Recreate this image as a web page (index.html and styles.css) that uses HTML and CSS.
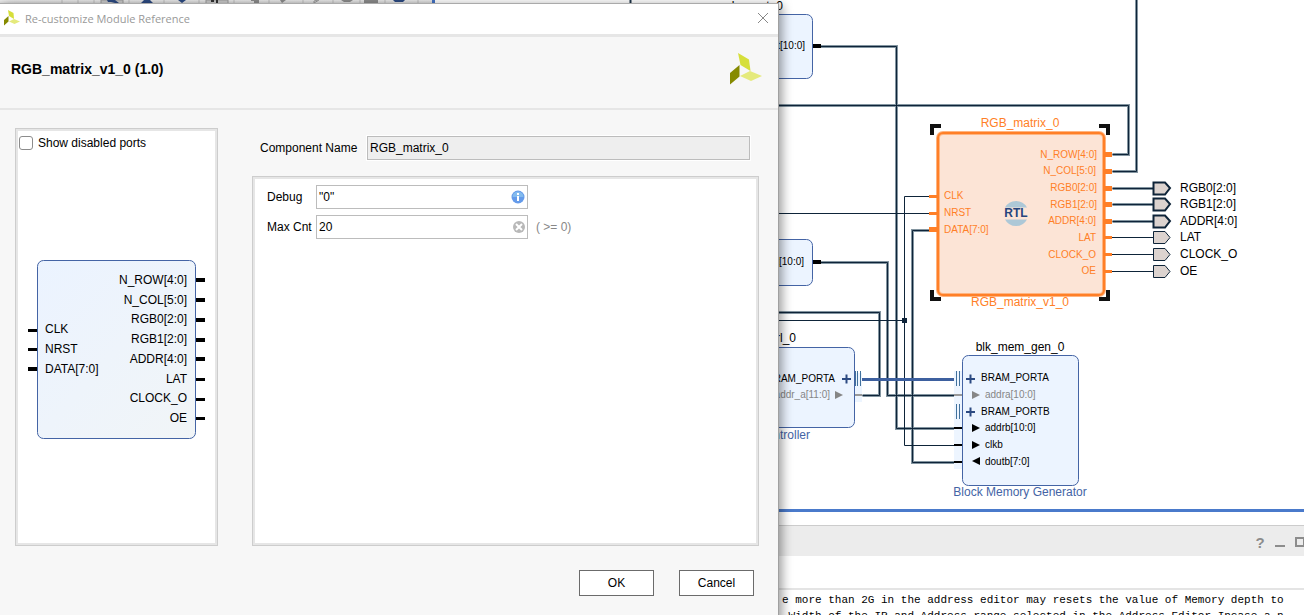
FILE: index.html
```html
<!DOCTYPE html>
<html lang="en">
<head>
<meta charset="utf-8">
<title>Re-customize Module Reference</title>
<link rel="stylesheet" href="styles.css">
</head>
<body>
<main class="workspace">
  <section class="canvas" aria-label="Block design">
    <svg class="schematic" width="1304" height="525" viewBox="0 0 1304 525">
      <defs>
        <linearGradient id="tool" x1="0" y1="0" x2="0" y2="1"><stop offset="0" stop-color="#ebebeb"/><stop offset="1" stop-color="#d5d5d5"/></linearGradient>
      </defs>
      <!-- toolbar strip -->
      <rect x="0" y="0" width="432" height="4" fill="url(#tool)"/>
      <path d="M62 0V4M78 0V4M94 0V4M129 0V4M164 0V4M199 0V4M234 0V4M269 0V4M303 0V4M333 0V4M360 0V4M385 0V4M418 0V4" stroke="#bdbdbd"/>
      <path d="M101 0h22v4h-22zM206 0h22v4h-22z" fill="#cacaca" stroke="#9a9a9a"/>
      <path d="M107 0h8l4 3h-4l-4-1h-3zM144 0h6l3 3h-12zM178 0h8l-4 3zM393 0h12l-2 2h-8z" fill="#2c4a82"/>
      <path d="M211 0h3v2h-3zM216 0h2v3h-2z" fill="#333"/>
      <path d="M251 0h8v3h-5v-2h-3zM280 0h6l-4 3zM341 0h12l-3 2h-6zM364 0h14v3h-14z" fill="#8b8b8b"/>
      <path d="M314 3V1L318 0M314 3L319 0" fill="none" stroke="#999"/>
      <path d="M432 0h3v4h-3z" fill="#4472c4"/>
      <path d="M630.500 0V4" stroke="#1d3347" stroke-width="2"/>

      <g transform="translate(.5 .5)">
        <g class="bus-edge"><path id="buses" d="M820 46H896V428H955M770 105H1128V154H1112M1136 -1V171H1112M770 312H879V395H862M820 262H887V395H955M932 230H912V462H955M1112 188H1153M1112 204H1153M1112 221H1153"/></g>
        <use href="#buses" class="bus-core"/>
      </g>
      <path class="net" d="M932 196.500H904.500V445.500H955M770 213.500H932M770 320.500H904.500M1112 237.500H1153M1112 254.500H1153M1112 271.500H1153"/>
      <rect x="902" y="318" width="5" height="5" fill="#0e2439"/>
      <path d="M862 379.500H955" stroke="#3d609f" stroke-width="3"/>

      <rect class="port-bg" x="855" y="373" width="7" height="29"/>
      <rect class="port-bg" x="954" y="371" width="8" height="98"/>
      <path class="iface" d="M855.500 371V386M857.500 371V386M860.500 371V386M956.500 371V386M959.500 371V386M956.500 404V419M959.500 404V419"/>
      <path d="M855 395H862M954 395H962" stroke="#999" stroke-width="2"/>
      <path d="M954 428H962M954 445H962M954 462H962" stroke="#000" stroke-width="2"/>

      <g class="block">
        <rect x="700.500" y="14.500" width="112" height="64" rx="6"/>
        <rect x="700.500" y="239.500" width="112" height="46" rx="6"/>
        <rect x="700.500" y="347.500" width="154" height="80" rx="6"/>
        <rect x="962.500" y="355.500" width="116" height="130" rx="6"/>
      </g>
      <path d="M813 46H821M813 262H821" stroke="#000" stroke-width="4"/>
      <g class="label">
        <text x="783" y="10" text-anchor="end">xlconcat_0</text>
        <text x="796" y="342" text-anchor="end">axi_bram_ctrl_0</text>
        <text x="1020" y="351" text-anchor="middle">blk_mem_gen_0</text>
        <text x="1180" y="192">RGB0[2:0]</text><text x="1180" y="208">RGB1[2:0]</text><text x="1180" y="225">ADDR[4:0]</text>
        <text x="1180" y="241">LAT</text><text x="1180" y="258">CLOCK_O</text><text x="1180" y="275">OE</text>
      </g>
      <g class="pin">
        <text x="805" y="49" text-anchor="end">dout[10:0]</text>
        <text x="804" y="265" text-anchor="end">dout[10:0]</text>
        <text x="835" y="382" text-anchor="end">BRAM_PORTA</text>
        <text x="981" y="381">BRAM_PORTA</text><text x="981" y="415">BRAM_PORTB</text>
        <text class="muted" x="830" y="398" text-anchor="end">addr_a[11:0]</text>
        <text class="muted" x="985" y="398">addra[10:0]</text>
        <text x="985" y="431">addrb[10:0]</text><text x="985" y="448">clkb</text><text x="985" y="465">doutb[7:0]</text>
      </g>
      <path d="M842 379H851M846.500 374.500V383.500M966 379H975M970.500 374.500V383.500M966 412H975M970.500 407.500V416.500" stroke="#2c4a82" stroke-width="2"/>
      <path d="M835 391l8 4-8 4zM972 391l8 4-8 4z" fill="#868686"/>
      <path d="M972 424l8 4-8 4zM972 441l8 4-8 4zM980 457l-8 4 8 4z"/>
      <g class="caption"><text x="810" y="439" text-anchor="end">AXI BRAM Controller</text><text x="1020" y="496" text-anchor="middle">Block Memory Generator</text></g>

      <!-- selected RTL module -->
      <path d="M941 126H932V135M1099 126H1108V135M932 290V299H941M1099 299H1108V290" fill="none" stroke="#111" stroke-width="4"/>
      <rect x="938" y="133" width="166" height="162" rx="5" fill="#fce4d6" stroke="#ffb480" stroke-width="4"/>
      <rect x="938" y="133" width="166" height="162" rx="5" fill="none" stroke="#ff7f27" stroke-width="2"/>
      <path d="M1105 154.500H1112M1105 171.500H1112M1105 188.500H1112M1105 204.500H1112M1105 221.500H1112M929 229.500H937" stroke="#ff7f27" stroke-width="5"/>
      <path d="M1105 237.500H1112M1105 254.500H1112M1105 271.500H1112M929 196.500H937M929 213.500H937" stroke="#ff7f27" stroke-width="3"/>
      <g class="selected-name"><text x="1020" y="127" text-anchor="middle">RGB_matrix_0</text><text x="1020" y="306" text-anchor="middle">RGB_matrix_v1_0</text></g>
      <g class="selected">
        <text x="944" y="199">CLK</text><text x="944" y="216">NRST</text><text x="944" y="233">DATA[7:0]</text>
        <g text-anchor="end"><text x="1097" y="158">N_ROW[4:0]</text><text x="1096" y="174">N_COL[5:0]</text><text x="1097" y="191">RGB0[2:0]</text><text x="1097" y="208">RGB1[2:0]</text><text x="1096" y="224">ADDR[4:0]</text><text x="1096" y="241">LAT</text><text x="1096" y="258">CLOCK_O</text><text x="1096" y="274">OE</text></g>
      </g>
      <path d="M1005 207.500a12.500 12.500 0 0 1 22 0zM1005 219.500a12.500 12.500 0 0 0 22 0z" fill="#adc8d7"/>
      <text class="rtl" x="1016" y="217" text-anchor="middle">RTL</text>

      <g fill="#dcd3cf" stroke="#0e2439">
        <path stroke-width="2" d="M1153.500 182.500H1165L1170 188L1165 194.500H1153.500zM1153.500 198.500H1165L1170 204L1165 210.500H1153.500zM1153.500 215.500H1165L1170 221L1165 227.500H1153.500z"/>
        <path d="M1153.500 231.500H1165L1170 237.500L1165 243.500H1153.500zM1153.500 248.500H1165L1170 254.500L1165 260.500H1153.500zM1153.500 265.500H1165L1170 271.500L1165 277.500H1153.500z"/>
      </g>
      <rect x="0" y="509" width="1304" height="3" fill="#4a7acb"/>
    </svg>
  </section>
  <section class="console" aria-label="Console">
    <header class="console-bar">
      <button class="tool" aria-label="Help">?</button>
      <button class="tool" aria-label="Minimize"><svg width="12" height="12"><path d="M1 10H11" stroke="#8c8c8c" stroke-width="2"/></svg></button>
      <button class="tool" aria-label="Maximize"><svg width="12" height="12"><rect x="2" y="2" width="8" height="8" fill="none" stroke="#8c8c8c" stroke-width="2"/></svg></button>
    </header>
    <div class="console-tools"></div>
    <div class="log"><p>e more than 2G in the address editor may resets the value of Memory depth to</p><p> Width of the IP and Address range selected in the Address Editor.Incase a n</p></div>
  </section>
</main>

<div class="dialog" role="dialog" aria-labelledby="dialog-title">
  <header class="titlebar">
    <svg viewBox="0 0 32 32" width="16" height="16"><path fill="#d6df3a" d="M8 0L19 6L20 18L10 12z"/><path fill="#868a00" d="M0 20L9 12V23L0 31z"/><path fill="#e5ea7c" d="M10 23L20 18L32 23L21 28z"/></svg>
    <h1 class="title" id="dialog-title">Re-customize Module Reference</h1>
    <button class="close" aria-label="Close"><svg width="12" height="12"><path d="M1 1L11 11M11 1L1 11" stroke="#888"/></svg></button>
  </header>
  <div class="heading">
    <h2 class="module">RGB_matrix_v1_0 (1.0)</h2>
    <svg viewBox="0 0 32 32" width="32" height="32"><path fill="#d6df3a" d="M8 0L19 6.500L20.500 18L10.500 12z"/><path fill="#868a00" d="M0 20L9.500 12V23.500L0 31.500z"/><path fill="#e5ea7c" d="M10 23L20 18L32 23L21 28z"/></svg>
  </div>
  <form class="content">
    <div class="columns">
      <section class="panel preview">
        <label class="check"><input type="checkbox" class="box">Show disabled ports</label>
        <svg class="symbol" width="180" height="180" viewBox="0 0 180 180">
          <defs><linearGradient id="face" x1="0" y1="0" x2="1" y2="1"><stop offset="0" stop-color="#ebf3ff"/><stop offset="1" stop-color="#f1f5f7"/></linearGradient></defs>
          <rect x="10.500" y="1.500" width="158" height="178" rx="6" fill="url(#face)" stroke="#4464a5"/>
          <path stroke="#000" stroke-width="4" d="M169 21H178M169 41H178M169 61H178M169 81H178M169 100H178M1 110H10"/>
          <path stroke="#000" stroke-width="3" d="M169 120.500H178M169 140.500H178M169 159.500H178M1 71.500H10M1 90.500H10"/>
          <text x="18" y="74">CLK</text><text x="18" y="94">NRST</text><text x="18" y="114">DATA[7:0]</text>
          <g text-anchor="end"><text x="160" y="25">N_ROW[4:0]</text><text x="160" y="45">N_COL[5:0]</text><text x="160" y="64">RGB0[2:0]</text><text x="160" y="84">RGB1[2:0]</text><text x="160" y="104">ADDR[4:0]</text><text x="160" y="124">LAT</text><text x="160" y="143">CLOCK_O</text><text x="160" y="163">OE</text></g>
        </svg>
      </section>
      <section class="settings">
        <div class="name-row"><label for="component">Component Name</label><input id="component" class="field disabled" value="RGB_matrix_0" readonly></div>
        <div class="panel params">
          <label for="debug">Debug</label>
          <div class="entry"><input id="debug" class="field" value='"0"'><svg class="mark" width="14" height="14"><circle cx="7" cy="7" r="6.500" fill="#659bea"/><path d="M1.500 7a5.500 5.500 0 0 1 11 0z" fill="#83bbee"/><path d="M7 3V5M7 6V11" stroke="#fff" stroke-width="2"/></svg></div>
          <span></span>
          <label for="max">Max Cnt</label>
          <div class="entry"><input id="max" class="field" value="20"><svg class="mark" width="14" height="14"><circle cx="8" cy="7" r="6" fill="#b8b8b8"/><path d="M5 4L11 10M11 4L5 10" stroke="#fff" stroke-width="2"/></svg></div>
          <span class="hint">( &gt;= 0)</span>
        </div>
      </section>
    </div>
    <div class="actions"><button type="button" class="action">OK</button><button type="button" class="action">Cancel</button></div>
  </form>
</div>
</body>
</html>
```
FILE: styles.css
```css
* { box-sizing: border-box; }
body { margin: 0; height: 100vh; overflow: hidden; position: relative; background: #fff; color: #000; font: 12px "Liberation Sans", Arial, sans-serif; }
h1, h2, p { margin: 0; }
button, input { font: inherit; color: inherit; }

.workspace { display: flex; flex-direction: column; height: 100%; }
.canvas { flex: none; overflow: hidden; }
.schematic { display: block; }
.bus-edge { fill: none; stroke: #8395a0; stroke-width: 3; }
.bus-core { fill: none; stroke: #0e2439; stroke-width: 1; }
.net { fill: none; stroke: #0e2439; }
.port-bg { fill: #edf5ff; }
.iface { stroke: #41719c; }
.block { fill: #ecf4ff; stroke: #4464a5; }
.label { font-size: 12px; }
.pin { font-size: 10px; }
.muted { fill: #868686; }
.caption { font-size: 12px; fill: #4464a5; }
.selected { font-size: 10px; fill: #ff7f27; }
.selected-name { font-size: 12px; fill: #ff7f27; }
.rtl { font-size: 12px; font-weight: bold; fill: #26457d; }

.console { flex: 1; min-height: 0; overflow: hidden; display: flex; flex-direction: column; }
.console-bar { flex: none; height: 31px; display: flex; align-items: center; justify-content: flex-end; gap: 8px; padding-top: 1px; background: #ececec; border-top: 1px solid #ccc; }
.console-bar .tool:last-child { margin-right: -2px; }
.tool { display: grid; place-items: center; width: 12px; height: 16px; padding: 0; border: 0; background: none; color: #8c8c8c; font-size: 15px; font-weight: bold; }
.console-tools { flex: none; height: 34px; border-bottom: 2px solid #e4e4e4; }
.log { padding: 2px 0 0 782px; white-space: pre; font: 11px/16px "Liberation Mono", monospace; }

.dialog { position: absolute; left: 0; top: 3px; width: min(779px, 100%); height: 640px; display: flex; flex-direction: column; background: #f7f7f7; border-top: 1px solid #aaa; border-right: 1px solid #a0a0a0; box-shadow: 3px 2px 10px rgba(0, 0, 0, .4); }
.titlebar { flex: none; display: flex; align-items: center; gap: 5px; height: 33px; padding: 0 9px 2px 4px; background: #fff; border-bottom: 3px solid #e6e6e6; }
.title { flex: 1; color: #999; font: 11px "Open Sans", sans-serif; }
.close { display: grid; padding: 0; border: 0; background: none; }
.heading { flex: none; display: flex; align-items: center; justify-content: space-between; height: 73px; padding: 0 16px 8px 11px; border-bottom: 2px solid #e6e6e6; }
.module { font-size: 14px; font-weight: bold; }
.content { padding: 18px 19px 0 15px; }
.columns { display: flex; gap: 34px; height: 418px; }
.panel { background: #fff; border: 1px solid #cdcdcd; box-shadow: inset 0 0 0 2px #e6e6e6; }
.preview { width: 203px; padding: 6px 3px; }
.check { display: flex; align-items: center; gap: 5px; height: 16px; }
.box { appearance: none; width: 14px; height: 14px; margin: 0; border: 1px solid #8c8c8c; border-radius: 3px; background: #fff; }
.symbol { display: block; margin: 108px 0 0 8px; font-size: 12px; }
.settings { flex: 1; min-width: 0; display: flex; flex-direction: column; gap: 16px; padding-top: 8px; }
.name-row { display: grid; grid-template-columns: 102px 1fr; align-items: center; gap: 5px; padding: 0 9px 0 8px; }
.field { width: 100%; height: 24px; padding: 0 2px; border: 1px solid #bcbcbc; background: #fff; outline: 0; }
.disabled { background: #eee; box-shadow: 0 0 0 1px #fff; }
.params { flex: 1; display: grid; grid-template-columns: 44px 212px 1fr; gap: 6px; column-gap: 5px; align-content: start; align-items: center; padding: 8px 14px; }
.params label { white-space: nowrap; }
.entry { display: flex; align-items: center; }
.mark { flex: none; margin-left: -17px; margin-right: 3px; }
.hint { padding-left: 3px; color: #888; }
.actions { display: flex; justify-content: flex-end; gap: 25px; padding: 24px 5px 0 0; }
.action { width: 75px; height: 26px; padding: 0; border: 1px solid #6b6b6b; background: #fff; }
```
